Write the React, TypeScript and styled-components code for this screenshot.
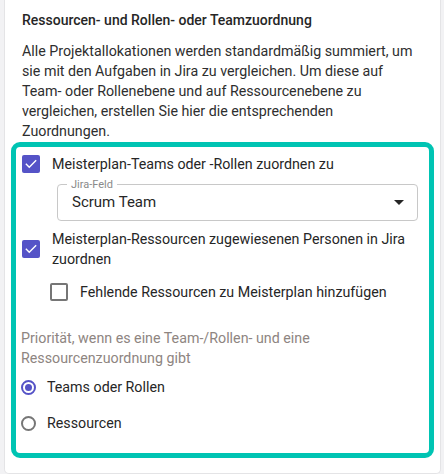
import React, { useState } from "react";
import styled, { createGlobalStyle } from "styled-components";

const GlobalStyle = createGlobalStyle`
  html, body {
    margin: 0;
    padding: 0;
    background: #f2f2f4;
  }
  body {
    font-family: Roboto, "Noto Sans", sans-serif;
    color: #262626;
  }
`;

const Page = styled.div`
  width: 444px;
  height: 474px;
  box-sizing: border-box;
  padding: 0 3px 2px 4px;
`;

const Card = styled.div`
  background: #ffffff;
  border: 1px solid #e4e4e6;
  border-top: none;
  border-radius: 0 0 5px 5px;
  padding: 10px 6px 15px 6px;
`;

const Intro = styled.div`
  padding: 0 11px;
`;

const Title = styled.h3`
  margin: 0;
  font-size: 14px;
  font-weight: 500;
  line-height: 20px;
  color: #262626;
`;

const Description = styled.p`
  margin: 11px 0 1px;
  font-size: 14.25px;
  line-height: 20px;
  color: #2e2e2e;
`;

const Highlight = styled.div`
  border: 5px solid #00c4b3;
  border-radius: 9px;
  padding: 7px 6px 20px 5px;
`;

const Row = styled.label<{ $indent?: number; $top?: number }>`
  display: flex;
  align-items: center;
  gap: 12px;
  margin-top: ${(p) => p.$top ?? 0}px;
  padding-left: ${(p) => p.$indent ?? 1}px;
  font-size: 14.25px;
  line-height: 20px;
  color: #262626;
  cursor: pointer;
`;

const Box = styled.span<{ $checked: boolean }>`
  flex: none;
  width: 18px;
  height: 18px;
  box-sizing: border-box;
  border-radius: 2px;
  display: flex;
  align-items: center;
  justify-content: center;
  background: ${(p) => (p.$checked ? "#5553c7" : "#fff")};
  border: ${(p) => (p.$checked ? "none" : "2px solid #767676")};
`;

const Field = styled.fieldset`
  margin: 5px 5px 0 36px;
  padding: 0 14px;
  height: 42px;
  box-sizing: border-box;
  border: 1px solid #c8c8c8;
  border-radius: 4px;
  display: flex;
  align-items: center;
  justify-content: space-between;
`;

const Legend = styled.legend`
  font-size: 11px;
  line-height: 11px;
  color: #8a8a8a;
  padding: 0 4px;
  margin-left: -5px;
`;

const FieldValue = styled.span`
  font-size: 15px;
  color: #262626;
  margin-top: -7px;
`;

const Caret = styled.span`
  width: 0;
  height: 0;
  border-left: 5px solid transparent;
  border-right: 5px solid transparent;
  border-top: 5px solid #262626;
  margin-top: -6px;
  margin-right: -1px;
`;

const Hint = styled.p`
  margin: 26px 0 0;
  font-size: 14.25px;
  line-height: 20px;
  color: #8e8581;
`;

const RadioRow = styled.label<{ $top: number }>`
  display: flex;
  align-items: center;
  gap: 11px;
  margin-top: ${(p) => p.$top}px;
  font-size: 14.25px;
  line-height: 20px;
  color: #262626;
  cursor: pointer;
`;

const Radio = styled.span<{ $checked: boolean }>`
  flex: none;
  width: 15px;
  height: 15px;
  box-sizing: border-box;
  border-radius: 50%;
  border: 2px solid ${(p) => (p.$checked ? "#5553c7" : "#767676")};
  display: flex;
  align-items: center;
  justify-content: center;
  &::after {
    content: "";
    width: 7px;
    height: 7px;
    border-radius: 50%;
    background: ${(p) => (p.$checked ? "#5553c7" : "transparent")};
  }
`;

const Check = () => (
  <svg width="14" height="14" viewBox="0 0 24 24">
    <path
      d="M4 12.5l5 5L20 6.5"
      fill="none"
      stroke="#fff"
      strokeWidth="2.4"
      strokeLinecap="square"
    />
  </svg>
);

const Checkbox = ({ checked }: { checked: boolean }) => (
  <Box $checked={checked}>{checked && <Check />}</Box>
);

export default function App() {
  const [priority, setPriority] = useState("teams");
  return (
    <>
      <GlobalStyle />
      <Page>
        <Card>
          <Intro>
            <Title>Ressourcen- und Rollen- oder Teamzuordnung</Title>
            <Description>
              Alle Projektallokationen werden standardmäßig summiert, um sie
              mit den Aufgaben in Jira zu vergleichen. Um diese auf Team- oder
              Rollenebene und auf Ressourcenebene zu vergleichen, erstellen Sie
              hier die entsprechenden Zuordnungen.
            </Description>
          </Intro>
          <Highlight>
            <Row>
              <Checkbox checked />
              Meisterplan-Teams oder -Rollen zuordnen zu
            </Row>
            <Field>
              <Legend>Jira-Feld</Legend>
              <FieldValue>Scrum Team</FieldValue>
              <Caret />
            </Field>
            <Row $top={8}>
              <Checkbox checked />
              Meisterplan-Ressourcen zugewiesenen Personen in Jira zuordnen
            </Row>
            <Row $top={13} $indent={29}>
              <Checkbox checked={false} />
              Fehlende Ressourcen zu Meisterplan hinzufügen
            </Row>
            <Hint>
              Priorität, wenn es eine Team-/Rollen- und eine
              Ressourcenzuordnung gibt
            </Hint>
            <RadioRow $top={9} onClick={() => setPriority("teams")}>
              <Radio $checked={priority === "teams"} />
              Teams oder Rollen
            </RadioRow>
            <RadioRow $top={16} onClick={() => setPriority("res")}>
              <Radio $checked={priority === "res"} />
              Ressourcen
            </RadioRow>
          </Highlight>
        </Card>
      </Page>
    </>
  );
}
